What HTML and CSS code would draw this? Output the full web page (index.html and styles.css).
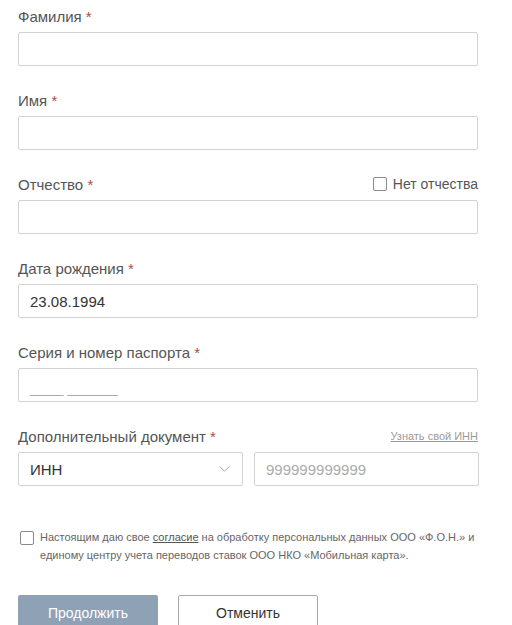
FILE: index.html
```html
<!DOCTYPE html>
<html lang="ru">
<head>
<meta charset="utf-8">
<link rel="stylesheet" href="styles.css">
</head>
<body>
<form class="form">
  <div class="field">
    <div class="label-row"><label class="label">Фамилия <span class="req">*</span></label></div>
    <div class="input"></div>
  </div>
  <div class="field">
    <div class="label-row"><label class="label">Имя <span class="req">*</span></label></div>
    <div class="input"></div>
  </div>
  <div class="field">
    <div class="label-row">
      <label class="label">Отчество <span class="req">*</span></label>
      <span class="check-inline"><span class="box"></span>Нет отчества</span>
    </div>
    <div class="input"></div>
  </div>
  <div class="field">
    <div class="label-row"><label class="label">Дата рождения <span class="req">*</span></label></div>
    <div class="input value">23.08.1994</div>
  </div>
  <div class="field">
    <div class="label-row"><label class="label">Серия и номер паспорта <span class="req">*</span></label></div>
    <div class="input placeholder mask">____ ______</div>
  </div>
  <div class="field">
    <div class="label-row">
      <label class="label">Дополнительный документ <span class="req">*</span></label>
      <a class="hint-link">Узнать свой ИНН</a>
    </div>
    <div class="pair">
      <div class="input select value">ИНН
        <svg class="chev" width="11" height="6" viewBox="0 0 11 6"><path d="M0.5 0.5 L5.5 5 L10.5 0.5" fill="none" stroke="#a9a9a9" stroke-width="1"/></svg>
      </div>
      <div class="input placeholder">999999999999</div>
    </div>
  </div>
  <div class="consent">
    <span class="box big"></span>
    <p class="consent-text">Настоящим даю свое <a class="consent-link">согласие</a> на обработку персональных данных ООО «Ф.О.Н.» и единому центру учета переводов ставок ООО НКО «Мобильная карта».</p>
  </div>
  <div class="actions">
    <button type="button" class="btn primary">Продолжить</button>
    <button type="button" class="btn secondary">Отменить</button>
  </div>
</form>
</body>
</html>
```
FILE: styles.css
```css
html, body {
  margin: 0;
  padding: 0;
  background: #fff;
}
body {
  font-family: "Liberation Sans", Arial, sans-serif;
  color: #444;
}
.form {
  width: 460px;
  padding: 6px 0 0 18px;
}
.field {
  margin-bottom: 24px;
}
.label-row {
  display: flex;
  justify-content: space-between;
  align-items: center;
  height: 20px;
  margin-bottom: 6px;
}
.label {
  font-size: 15px;
  color: #555;
}
.req {
  color: #b04848;
}
.check-inline {
  display: flex;
  align-items: center;
  font-size: 14px;
  color: #555;
}
.box {
  display: inline-block;
  width: 12px;
  height: 12px;
  border: 1px solid #8a8a8a;
  border-radius: 2px;
  margin-right: 6px;
  box-sizing: content-box;
}
.input {
  box-sizing: border-box;
  height: 34px;
  border: 1px solid #d3d3d3;
  border-radius: 2px;
  padding: 0 11px;
  display: flex;
  align-items: center;
  font-size: 15px;
  color: #333;
  background: #fff;
}
.placeholder {
  color: #ababab;
}
.mask {
  font-size: 15px;
  padding-top: 4px;
}
.hint-link {
  font-size: 11px;
  color: #9a9a9a;
  text-decoration: underline;
}
.pair {
  display: flex;
  gap: 11px;
}
.pair .input {
  flex: 0 0 225px;
}
.select {
  justify-content: space-between;
}
.chev {
  margin-right: 1px;
}
.consent {
  display: flex;
  align-items: flex-start;
  margin-top: 44px;
}
.box.big {
  width: 12px;
  height: 12px;
  margin: 1px 6px 0 2px;
  flex: none;
}
.consent-text {
  margin: 0;
  font-size: 11px;
  line-height: 18px;
  color: #666;
  margin-top: -2px;
}
.consent-link {
  text-decoration: underline;
  color: #555;
}
.actions {
  display: flex;
  gap: 20px;
  margin-top: 31px;
}
.btn {
  width: 140px;
  height: 36px;
  border-radius: 2px;
  font-family: "Liberation Sans", Arial, sans-serif;
  font-size: 14px;
  box-sizing: border-box;
  padding: 0;
}
.primary {
  background: #8fa1b4;
  border: none;
  color: #fff;
}
.secondary {
  background: #fff;
  border: 1px solid #a9a9a9;
  color: #333;
}
```
